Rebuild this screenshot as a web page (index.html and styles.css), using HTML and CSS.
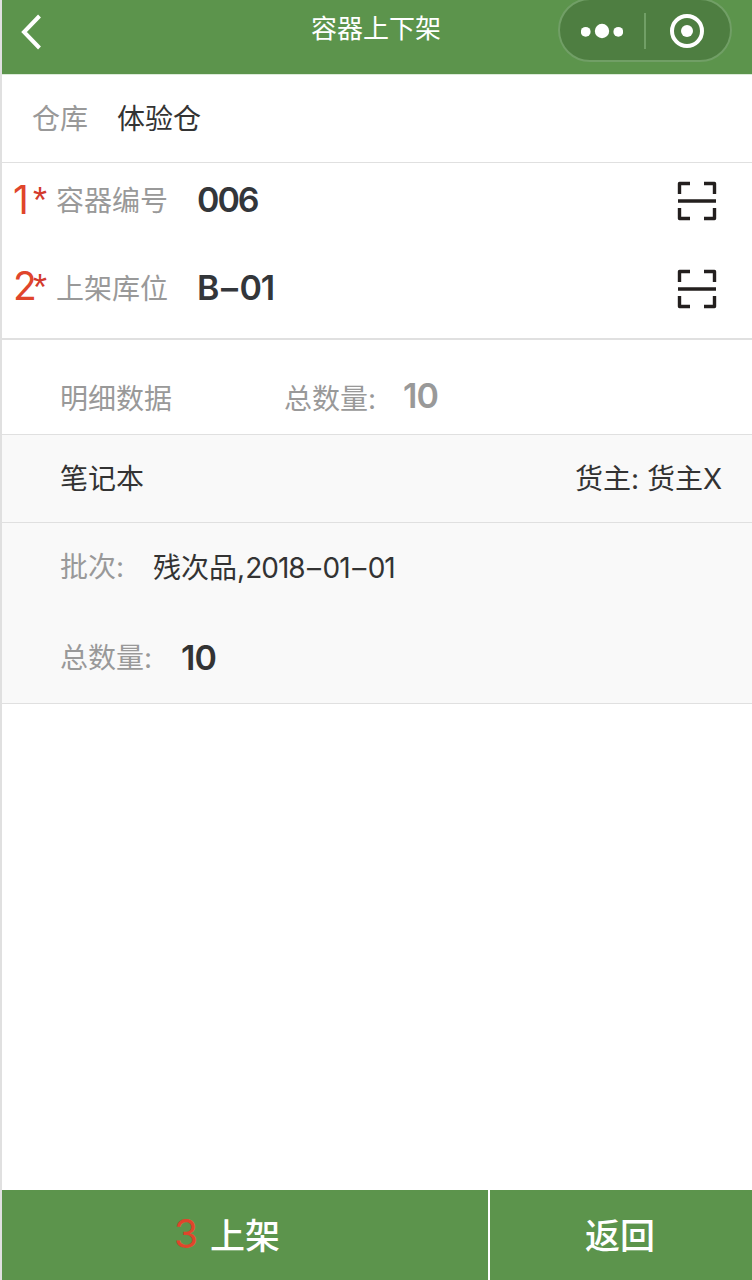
FILE: index.html
```html
<!DOCTYPE html>
<html lang="zh-CN">
<head>
    <meta charset="utf-8">
    <title>容器上下架</title>
    <link rel="stylesheet" href="styles.css">
</head>
<body>
<div class="page">
    <div class="header">
        <svg class="back" width="22" height="36" viewBox="0 0 22 36">
            <path d="M20.500 2L5 18L20.500 34" fill="none" stroke="#fff" stroke-width="4"/>
        </svg>
        <span class="title">容器上下架</span>
        <div class="capsule">
            <svg width="42" height="16" viewBox="0 0 42 16">
                <g fill="#fff">
                    <circle cx="4.7" cy="8.8" r="4.9"/>
                    <circle cx="21" cy="8" r="7.2"/>
                    <circle cx="37.3" cy="8.8" r="4.9"/>
                </g>
            </svg>
            <span class="capsule-line"></span>
            <svg width="36" height="36" viewBox="0 0 36 36">
                <circle cx="18" cy="18" r="15" fill="none" stroke="#fff" stroke-width="4"/>
                <circle cx="18" cy="18" r="6" fill="#fff"/>
            </svg>
        </div>
    </div>

    <div class="row warehouse">
        <span class="label">仓库</span>
        <span class="value">体验仓</span>
    </div>

    <div class="form">
        <div class="row field">
            <span class="step">1</span>
            <span class="required">*</span>
            <span class="label">容器编号</span>
            <span class="value strong number">006</span>
            <svg class="scan" width="40" height="40" viewBox="0 0 40 40">
                <path d="M13 2.5H2.500V13M27 2.5H37.500V13M2.500 27V37.500H13M37.500 27V37.500H27M1 20H39"/>
            </svg>
        </div>
        <div class="row field">
            <span class="step">2</span>
            <span class="required">*</span>
            <span class="label">上架库位</span>
            <span class="value strong">B<span class="dash">–</span>01</span>
            <svg class="scan" width="40" height="40" viewBox="0 0 40 40">
                <path d="M13 2.5H2.500V13M27 2.5H37.500V13M2.500 27V37.500H13M37.500 27V37.500H27M1 20H39"/>
            </svg>
        </div>
    </div>

    <div class="row summary">
        <span class="label">明细数据</span>
        <span class="label total">总数量:</span>
        <span class="strong count">10</span>
    </div>

    <div class="row goods">
        <span>笔记本</span>
        <span class="owner">货主: 货主X</span>
    </div>

    <div class="detail">
        <div class="row batch">
            <span class="label">批次:</span>
            <span class="value">残次品,<span class="date">2018<span class="dash">–</span>01<span class="dash">–</span>01</span></span>
        </div>
        <div class="row quantity">
            <span class="label">总数量:</span>
            <span class="value strong">10</span>
        </div>
    </div>

    <div class="footer">
        <div class="button button-main"><span class="step-button">3</span>上架</div>
        <div class="button button-back">返回</div>
    </div>
</div>
</body>
</html>
```
FILE: styles.css
```css
* {
    box-sizing: border-box;
}

body {
    margin: 0;
    font-family: Inter, "Noto Sans CJK SC", sans-serif;
    font-size: 28px;
    line-height: 40px;
    color: #333;
    background: #fff;
}

.page {
    display: flex;
    flex-direction: column;
    height: 1280px;
    border-left: 2px solid #e0e0e0;
}

.header {
    display: flex;
    position: relative;
    height: 75px;
    padding: 14px 20px 0 17px;
    justify-content: space-between;
    background: #5c944c;
    border-bottom: 1px solid #dcebd9;
    overflow: hidden;
}

.title {
    position: absolute;
    left: 0;
    right: 2px;
    top: 9px;
    text-align: center;
    color: #fff;
    font-size: 26px;
}

.capsule {
    display: flex;
    align-items: center;
    justify-content: space-between;
    width: 174px;
    height: 64px;
    margin-top: -16px;
    padding: 2px 25px 0 21px;
    background: #4e7e41;
    border: 2px solid #719f66;
    border-radius: 32px;
}

.capsule-line {
    width: 2px;
    height: 36px;
    margin-right: 2px;
    background: #719f66;
}

.row {
    display: flex;
    align-items: center;
    white-space: nowrap;
}

.label {
    color: #999;
}

.value {
    margin-left: 29px;
}

.strong {
    font-size: 34px;
    font-weight: 600;
    letter-spacing: -1px;
}

.number {
    letter-spacing: -2px;
}

.dash {
    margin: 0 2.5px;
}

.warehouse {
    height: 88px;
    padding-left: 30px;
    border-bottom: 1px solid #e0e0e0;
}

.form {
    height: 177px;
    border-bottom: 2px solid #e0e0e0;
}

.field {
    height: 76px;
    padding: 0 35px 0 11px;
}

.field .strong {
    margin-top: -2px;
    color: #33363a;
}

.field + .field {
    height: 100px;
}

.step {
    width: 20px;
    margin-top: -3px;
    font-size: 39px;
    letter-spacing: -2px;
    color: #e0452b;
}

.field + .field .step {
    margin-top: -6px;
}

.required {
    width: 23px;
    margin-top: -1px;
    font-family: "Liberation Sans", sans-serif;
    font-size: 36px;
    color: #d33a2c;
}

.field + .field .required {
    margin-top: -3px;
}

.scan {
    margin-left: auto;
    fill: none;
    stroke: #231f1e;
    stroke-width: 3.4;
    stroke-linejoin: round;
}

.summary {
    height: 95px;
    padding: 24px 0 0 58px;
    border-bottom: 1px solid #e0e0e0;
}

.total {
    margin-left: 112px;
}

.count {
    margin: -6px 0 0 27px;
    color: #999;
}

.goods {
    height: 88px;
    justify-content: space-between;
    padding: 0 30px 0 58px;
    background: #f9f9f9;
    border-bottom: 1px solid #e0e0e0;
}

.detail {
    height: 181px;
    padding-left: 58px;
    background: #f9f9f9;
    border-bottom: 1px solid #e0e0e0;
}

.batch {
    height: 90px;
}

.batch .label {
    margin-top: -2px;
}

.date {
    letter-spacing: -1px;
}

.quantity {
    height: 90px;
}

.footer {
    display: flex;
    height: 90px;
    margin-top: auto;
    gap: 2px;
}

.button {
    display: flex;
    align-items: center;
    justify-content: center;
    padding-top: 2px;
    color: #fff;
    background: #5c944c;
    font-size: 35px;
    font-weight: 500;
}

.button-main {
    width: 486px;
}

.button-back {
    flex-grow: 1;
    padding-right: 2px;
}

/* keeps the caption centred without the number */
.step-button {
    width: 36px;
    margin: -4px 0 0 -36px;
    font-size: 39px;
    font-weight: 400;
    color: #e0452b;
}
```
